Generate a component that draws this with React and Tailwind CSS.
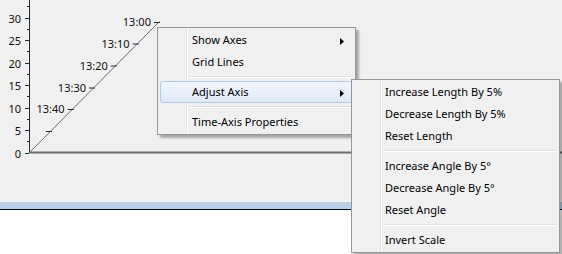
import React from "react";

const yTicks = [];
for (let v = 0; v <= 32.5; v += 2.5) yTicks.push(v);

const timeTicks = [
  { y: 22, label: "13:00" },
  { y: 43.5, label: "13:10" },
  { y: 65.5, label: "13:20" },
  { y: 87.5, label: "13:30" },
  { y: 109, label: "13:40" },
  { y: 131, label: "" },
];

const lineX = (y) => 29.5 + (152.5 - y) * 0.992;

function Chart() {
  return (
    <svg width="562" height="201" className="block">
      {/* y axis */}
      <line x1="29.5" y1="0" x2="29.5" y2="153" stroke="#2a2a2a" strokeWidth="1" />
      {yTicks.map((v) => {
        const y = Math.round(152.5 - 4.5 * v) + 0.5;
        const major = v % 5 === 0;
        return (
          <g key={v}>
            <line x1={major ? 25 : 27} y1={y} x2="29" y2={y} stroke="#2a2a2a" strokeWidth="1" />
            {major && (
              <text x="21" y={y + 4} textAnchor="end" fontSize="11" fill="#111">
                {v}
              </text>
            )}
          </g>
        );
      })}
      {/* x axis */}
      <line x1="29" y1="152.5" x2="562" y2="152.5" stroke="#6d6d6d" strokeWidth="2" />
      {/* time axis */}
      <line x1="29.5" y1="152.5" x2="159.5" y2="21.5" stroke="#6d6d6d" strokeWidth="1" />
      {timeTicks.map((t) => {
        const x = lineX(t.y);
        return (
          <g key={t.y}>
            <line x1={x - 5} y1={t.y + 0.5} x2={x + 1} y2={t.y + 0.5} stroke="#2a2a2a" strokeWidth="1" />
            {t.label && (
              <text x={x - 8} y={t.y + 4} textAnchor="end" fontSize="11" fill="#111">
                {t.label}
              </text>
            )}
          </g>
        );
      })}
    </svg>
  );
}

function Arrow() {
  return (
    <svg width="4" height="7" className="absolute right-[8px] top-[8px]">
      <path d="M0 0 L4 3.5 L0 7 Z" fill="#000" />
    </svg>
  );
}

function Item({ children, hl, arrow, pl = "pl-[32px]" }) {
  return (
    <div
      className={
        "relative h-[22px] flex items-center rounded-[3px] border " +
        pl +
        (hl
          ? " border-[#aecbee] bg-gradient-to-b from-[#f2f6fc] to-[#dfeaf8]"
          : " border-transparent")
      }
    >
      <span className="-ml-px">{children}</span>
      {arrow && <Arrow />}
    </div>
  );
}

function Sep() {
  return (
    <div className="h-[8px] flex flex-col justify-center pl-[28px]">
      <div className="h-px bg-[#e0e0e0]" />
      <div className="h-px bg-white" />
    </div>
  );
}

function Gutter() {
  return (
    <div className="absolute left-[28px] top-0 bottom-0 flex">
      <div className="w-px bg-[#e2e3e3]" />
      <div className="w-px bg-white" />
    </div>
  );
}

export default function App() {
  return (
    <div className="relative w-[562px] h-[254px] overflow-hidden bg-white text-[11px] text-black font-['Noto_Sans',sans-serif]">
      <div className="h-[201px] bg-[#f0f0f0]">
        <Chart />
      </div>
      <div className="h-px bg-[#f7f7f7]" />
      <div className="h-[7px] bg-[#b9d1ea]" />
      <div className="h-px bg-black" />

      {/* context menu */}
      <div className="absolute left-[157px] top-[27px] w-[199px] border border-[#979797] bg-[#f0f0f0] px-[2px] pt-[1px] pb-[1px] shadow-[3px_3px_2px_rgba(0,0,0,0.3)]">
        <Gutter />
        <Item arrow>Show Axes</Item>
        <Item>Grid Lines</Item>
        <Sep />
        <Item hl arrow>Adjust Axis</Item>
        <Sep />
        <Item>Time-Axis Properties</Item>
      </div>

      {/* submenu */}
      <div className="absolute left-[351px] top-[79px] w-[209px] border border-[#979797] bg-[#f0f0f0] px-[2px] pt-[1px] pb-[1px] shadow-[3px_3px_2px_rgba(0,0,0,0.3)]">
        <Gutter />
        <Item pl="pl-[31px]">Increase Length By 5%</Item>
        <Item pl="pl-[31px]">Decrease Length By 5%</Item>
        <Item pl="pl-[31px]">Reset Length</Item>
        <Sep />
        <Item pl="pl-[31px]">Increase Angle By 5°</Item>
        <Item pl="pl-[31px]">Decrease Angle By 5°</Item>
        <Item pl="pl-[31px]">Reset Angle</Item>
        <Sep />
        <Item pl="pl-[31px]">Invert Scale</Item>
      </div>
    </div>
  );
}
